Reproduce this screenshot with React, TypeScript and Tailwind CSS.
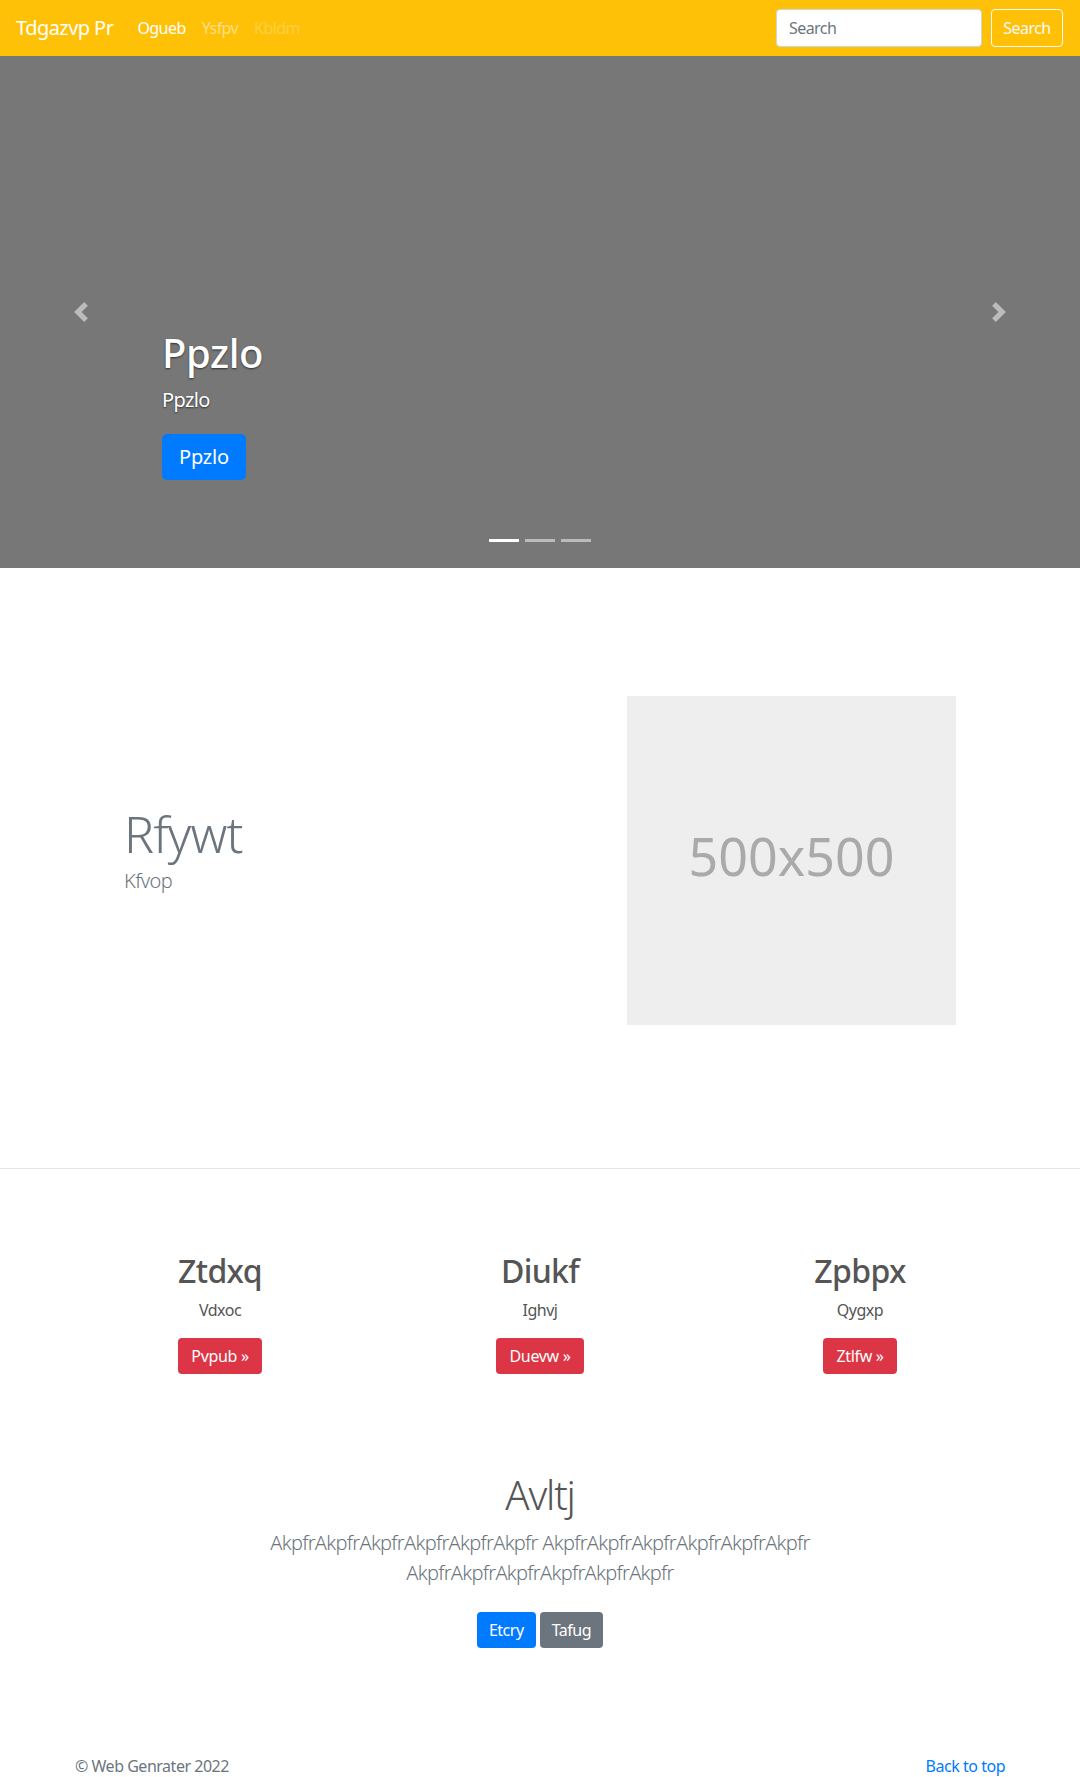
import React from "react";

const font = { fontFamily: '"Noto Sans", "Open Sans", Arial, sans-serif' };

function Navbar() {
  return (
    <nav className="flex h-[56px] items-center bg-[#ffc107] pl-[16px] pr-[17px] tracking-[-0.035em]">
      <a href="#" className="mr-[16px] py-[5px] text-[20px] leading-[30px] text-white">
        Tdgazvp Pr
      </a>
      <ul className="flex items-center">
        <li>
          <a href="#" className="px-[8px] py-[8px] text-[16px] leading-[24px] text-white">
            Ogueb
          </a>
        </li>
        <li>
          <a href="#" className="px-[8px] py-[8px] text-[16px] leading-[24px] text-white/50">
            Ysfpv
          </a>
        </li>
        <li>
          <span className="px-[8px] py-[8px] text-[16px] leading-[24px] text-white/25">Kbldm</span>
        </li>
      </ul>
      <form className="ml-auto flex items-center">
        <input
          type="text"
          placeholder="Search"
          className="mr-[9px] h-[38px] w-[206px] rounded-[4px] border border-[#ced4da] bg-white px-[12px] text-[16px] text-[#495057] placeholder:text-[#6c757d] outline-none"
        />
        <button
          type="button"
          className="h-[38px] w-[72px] rounded-[4px] border border-[#f8f9fa] text-[16px] text-[#f8f9fa]"
        >
          Search
        </button>
      </form>
    </nav>
  );
}

function Carousel() {
  return (
    <div className="relative h-[512px] bg-[#777777]">
      {/* prev / next controls */}
      <div className="absolute left-0 top-0 flex h-full w-[15%] items-center justify-center opacity-50">
        <svg width="20" height="20" viewBox="0 0 8 8" fill="#fff">
          <path d="M5.25 0l-4 4 4 4 1.5-1.5L4.25 4l2.5-2.5L5.25 0z" />
        </svg>
      </div>
      <div className="absolute right-0 top-0 flex h-full w-[15%] items-center justify-center opacity-50">
        <svg width="20" height="20" viewBox="0 0 8 8" fill="#fff">
          <path d="M2.75 0l-1.5 1.5L3.75 4l-2.5 2.5L2.75 8l4-4-4-4z" />
        </svg>
      </div>

      {/* caption */}
      <div className="absolute bottom-[88px] left-[15%] text-left text-white [text-shadow:0_1px_2px_rgba(0,0,0,0.6)]">
        <h1 className="mb-[8px] text-[40px] font-medium leading-[48px] tracking-[-0.01em]">Ppzlo</h1>
        <p className="mb-[19px] text-[20px] leading-[30px] tracking-[-0.03em]">Ppzlo</p>
        <a
          href="#"
          className="inline-block rounded-[5px] bg-[#007bff] px-[17px] py-[8px] text-[20px] leading-[30px] tracking-[-0.01em] text-white [text-shadow:none]"
        >
          Ppzlo
        </a>
      </div>

      {/* indicators */}
      <ol className="absolute bottom-[16px] left-0 right-0 flex justify-center">
        <li className="mx-[3px] h-[23px] w-[30px] border-y-[10px] border-transparent bg-white bg-clip-padding" />
        <li className="mx-[3px] h-[23px] w-[30px] border-y-[10px] border-transparent bg-white bg-clip-padding opacity-50" />
        <li className="mx-[3px] h-[23px] w-[30px] border-y-[10px] border-transparent bg-white bg-clip-padding opacity-50" />
      </ol>
    </div>
  );
}

function Featurette() {
  return (
    <section className="pt-[128px]">
      <div className="flex items-center pl-[124px]">
        <div className="w-[503px]">
          <h2 className="mb-[7px] text-[50px] font-light leading-[50px] tracking-[-0.8px] text-[#6c757d]">
            Rfywt
          </h2>
          <p className="mb-[16px] text-[20px] font-light leading-[30px] tracking-[-0.03em] text-[#6c757d]">
            Kfvop
          </p>
        </div>
        <div className="flex h-[329px] w-[329px] items-center justify-center bg-[#eeeeee]">
          <span className="pb-[10px] text-[52px] text-[#aaaaaa]">500x500</span>
        </div>
      </div>
      <hr className="mt-[143px] border-t border-black/10" />
    </section>
  );
}

const features = [
  { title: "Ztdxq", text: "Vdxoc", cta: "Pvpub" },
  { title: "Diukf", text: "Ighvj", cta: "Duevw" },
  { title: "Zpbpx", text: "Qygxp", cta: "Ztlfw" },
];

function Features() {
  return (
    <section className="mx-auto grid w-[960px] grid-cols-3 pt-[83px]">
      {features.map((f) => (
        <div key={f.title} className="text-center">
          <h2 className="mb-[8px] text-[32px] font-medium leading-[38px] tracking-[-0.02em] text-[#555555]">
            {f.title}
          </h2>
          <p className="mb-[16px] text-[16px] leading-[24px] tracking-[-0.03em] text-[#555555]">{f.text}</p>
          <a
            href="#"
            className="inline-block rounded-[4px] bg-[#dc3545] px-[13px] py-[6px] text-[16px] leading-[24px] tracking-[-0.02em] text-white"
          >
            {f.cta} &raquo;
          </a>
        </div>
      ))}
    </section>
  );
}

function Jumbotron() {
  return (
    <section className="pb-[50px] pt-[97px] text-center">
      <div className="mx-auto w-[610px]">
        <h1 className="mb-[9px] text-[40px] font-light leading-[48px] tracking-[-0.03em] text-[#555555]">Avltj</h1>
        <p className="mb-[16px] text-[20px] font-light leading-[30px] tracking-[-0.035em] text-[#6c757d]">
          AkpfrAkpfrAkpfrAkpfrAkpfrAkpfr AkpfrAkpfrAkpfrAkpfrAkpfrAkpfr AkpfrAkpfrAkpfrAkpfrAkpfrAkpfr
        </p>
        <p className="flex justify-center gap-[4px] tracking-[-0.03em]">
          <a
            href="#"
            className="my-[8px] inline-block rounded-[4px] bg-[#007bff] px-[12px] py-[6px] text-[16px] leading-[24px] text-white"
          >
            Etcry
          </a>
          <a
            href="#"
            className="my-[8px] inline-block rounded-[4px] bg-[#6c757d] px-[12px] py-[6px] text-[16px] leading-[24px] text-white"
          >
            Tafug
          </a>
        </p>
      </div>
    </section>
  );
}

function Footer() {
  return (
    <footer className="py-[48px] text-[#6c757d]">
      <div className="mx-auto flex w-[930px] justify-between text-[16px] leading-[24px] tracking-[-0.03em]">
        <p>&copy; Web Genrater 2022</p>
        <a href="#" className="text-[#007bff]">
          Back to top
        </a>
      </div>
    </footer>
  );
}

export default function App() {
  return (
    <div className="min-h-screen bg-white" style={font}>
      <Navbar />
      <Carousel />
      <Featurette />
      <Features />
      <Jumbotron />
      <Footer />
    </div>
  );
}
